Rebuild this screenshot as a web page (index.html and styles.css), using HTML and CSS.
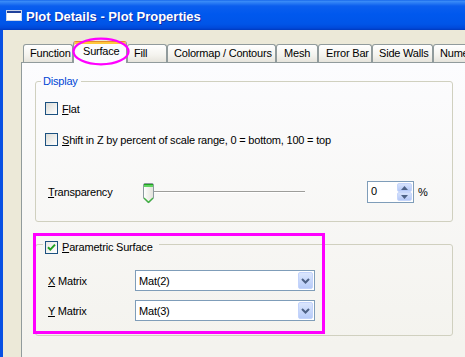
FILE: index.html
```html
<!DOCTYPE html>
<html lang="en">
<head>
    <meta charset="UTF-8">
    <meta name="viewport" content="width=device-width, initial-scale=1.0">
    <title>Plot Details - Plot Properties</title>
    <link rel="stylesheet" href="styles.css">
</head>
<body>
    <div class="window">
        <div class="titlebar">
            <svg class="app-icon" width="16" height="11" viewBox="0 0 16 11">
                <rect x="0.5" y="0.5" width="15" height="10" fill="#ffffff" stroke="#c9d4ea"/>
                <rect x="1" y="1" width="14" height="2" fill="#21439b"/>
            </svg>
            <span class="title">Plot Details - Plot Properties</span>
        </div>

        <div class="client">
            <div class="tabs">
                <div class="tab tab-function">Function</div>
                <div class="tab tab-surface active">Surface</div>
                <div class="tab tab-fill">Fill</div>
                <div class="tab tab-colormap">Colormap / Contours</div>
                <div class="tab tab-mesh">Mesh</div>
                <div class="tab tab-errorbar">Error Bar</div>
                <div class="tab tab-sidewalls">Side Walls</div>
                <div class="tab tab-numeric">Numeric</div>
                <!-- callout drawn around the selected tab -->
                <svg class="tab-marker" width="58" height="29" viewBox="0 0 58 29">
                    <ellipse cx="29" cy="14.5" rx="27.5" ry="12.8" fill="none" stroke="#ff00ff" stroke-width="2.3"/>
                </svg>
            </div>

            <div class="panel">
                <fieldset class="group group-display">
                    <legend>Display</legend>
                    <div class="check-row row-flat">
                        <span class="checkbox"></span>
                        <span><u>F</u>lat</span>
                    </div>
                    <div class="check-row row-shift">
                        <span class="checkbox"></span>
                        <span><u>S</u>hift in Z by percent of scale range, 0 = bottom, 100 = top</span>
                    </div>
                    <div class="field-row row-transparency">
                        <span class="field-label"><u>T</u>ransparency</span>
                        <div class="slider">
                            <svg class="slider-thumb" width="11" height="21" viewBox="0 0 11 21">
                                <defs>
                                    <linearGradient id="thumbFill" x1="0" y1="0" x2="1" y2="0">
                                        <stop offset="0" stop-color="#ffffff"/>
                                        <stop offset="1" stop-color="#e2e1da"/>
                                    </linearGradient>
                                </defs>
                                <path d="M0.5 2 Q0.5 0.5 2 0.5 H9 Q10.5 0.5 10.5 2 V15 L5.5 20 L0.5 15 Z" fill="url(#thumbFill)" stroke="#8c9a9f"/>
                                <rect x="1" y="1" width="9" height="1" fill="#21a121"/>
                                <rect x="1" y="2" width="9" height="2" fill="#5fd35f"/>
                                <path d="M1 15 L5.5 19.3 L10 15" fill="none" stroke="#3fb43f" stroke-width="1.2"/>
                            </svg>
                            <div class="slider-track"></div>
                        </div>
                        <div class="spin">
                            <span class="spin-value">0</span>
                            <div class="spin-buttons">
                                <span class="spin-btn">
                                    <svg width="7" height="4" viewBox="0 0 7 4"><path d="M0 4 L3.5 0 L7 4 Z" fill="#4d6185"/></svg>
                                </span>
                                <span class="spin-btn">
                                    <svg width="7" height="4" viewBox="0 0 7 4"><path d="M0 0 L3.5 4 L7 0 Z" fill="#4d6185"/></svg>
                                </span>
                            </div>
                        </div>
                        <span class="unit">%</span>
                    </div>
                </fieldset>

                <fieldset class="group group-param">
                    <legend>
                        <span class="checkbox checked">
                            <svg width="11" height="11" viewBox="0 0 11 11"><path d="M2 5.2 L4.3 7.6 L9 2.6" fill="none" stroke="#21a121" stroke-width="2"/></svg>
                        </span>
                        <span><u>P</u>arametric Surface</span>
                    </legend>
                    <div class="field-row row-xmatrix">
                        <span class="field-label"><u>X</u> Matrix</span>
                        <div class="combo">
                            <span class="combo-value">Mat(2)</span>
                            <span class="combo-btn">
                                <svg width="9" height="6" viewBox="0 0 9 6"><path d="M1 1 L4.5 4.5 L8 1" fill="none" stroke="#4d6185" stroke-width="2"/></svg>
                            </span>
                        </div>
                    </div>
                    <div class="field-row row-ymatrix">
                        <span class="field-label"><u>Y</u> Matrix</span>
                        <div class="combo">
                            <span class="combo-value">Mat(3)</span>
                            <span class="combo-btn">
                                <svg width="9" height="6" viewBox="0 0 9 6"><path d="M1 1 L4.5 4.5 L8 1" fill="none" stroke="#4d6185" stroke-width="2"/></svg>
                            </span>
                        </div>
                    </div>
                </fieldset>

                <!-- highlight frame over the parametric group -->
                <div class="highlight-box"></div>
            </div>
        </div>
    </div>
</body>
</html>
```

FILE: styles.css
```css
* {
    box-sizing: border-box;
}
html, body {
    margin: 0;
    padding: 0;
}
body {
    width: 465px;
    height: 357px;
    overflow: hidden;
    font-family: "Liberation Sans", Arial, sans-serif;
    font-size: 11px;
    letter-spacing: -0.2px;
    color: #000000;
    background-color: #ece9d8;
}
u {
    text-decoration-thickness: 1px;
    text-underline-offset: 1px;
}
.window {
    height: 357px;
    display: flex;
    flex-direction: column;
}

/* XP style caption */
.titlebar {
    height: 30px;
    flex: none;
    display: flex;
    align-items: flex-start;
    padding-left: 6px;
    background: linear-gradient(to bottom, #0a5ae6 0px, #3d8ef8 1px, #2a7cf4 3px, #0b5eee 6px, #0058ee 14px, #0055e8 24px, #0049da 28px, #0039be 30px);
}
.app-icon {
    margin-top: 10px;
    flex: none;
}
.title {
    margin-top: 9px;
    margin-left: 4px;
    color: #ffffff;
    font-weight: bold;
    font-size: 13px;
    letter-spacing: 0;
    text-shadow: 1px 1px 0 #0f2fa8;
}

.client {
    flex: 1;
    display: flex;
    flex-direction: column;
    border-left: 3px solid #0850e3;
    padding: 11px 0 0 18px;
}

/* tab strip */
.tabs {
    position: relative;
    height: 21px;
    flex: none;
    display: flex;
    align-items: flex-end;
    padding-left: 2px;
}
.tab {
    flex: none;
    height: 18px;
    border: 1px solid #919b9c;
    border-bottom: none;
    border-radius: 3px 3px 0 0;
    background: linear-gradient(to bottom, #ffffff, #f4f3ee 60%, #e6e4dc);
    padding-left: 6px;
    line-height: 17px;
    white-space: nowrap;
    overflow: hidden;
}
.tab.active {
    position: relative;
    z-index: 1;
    height: 22px;
    margin-bottom: -1px;
    border-top: 1px solid #e68b2c;
    box-shadow: inset 0 2px 0 #ffc83c;
    background: #fcfcfe;
    padding-left: 9px;
    line-height: 19px;
}
.tab-function { width: 50px; }
.tab-surface { width: 54px; }
.tab-fill { width: 40px; }
.tab-colormap { width: 109px; }
.tab-mesh { width: 42px; padding-left: 7px; }
.tab-errorbar { width: 54px; padding-left: 7px; }
.tab-sidewalls { width: 61px; }
.tab-numeric { width: 60px; }
.tab-marker {
    position: absolute;
    left: 51px;
    top: -4px;
    z-index: 2;
}

/* tab page */
.panel {
    flex: 1;
    position: relative;
    border: 1px solid #919b9c;
    border-right: none;
    border-bottom: none;
    background: linear-gradient(to bottom, #fcfcfe, #f4f3ee 280px);
    padding: 11px 0 0 13px;
}
.group {
    width: 418px;
    margin: 0;
    padding: 0;
    border: 1px solid #d0d0bf;
    border-radius: 3px;
    min-width: 0;
}
.group legend {
    line-height: 14px;
}
.group-display {
    padding-bottom: 18px;
}
.group-display legend {
    margin-left: 5px;
    padding: 0 3px 0 2px;
    color: #0046d5;
}
.group-param {
    margin-top: 13px;
    padding-bottom: 14px;
}
.group-param legend {
    display: flex;
    align-items: center;
    margin-left: 7px;
    padding: 5px 6px 0 2px;
}

.checkbox {
    flex: none;
    width: 13px;
    height: 13px;
    border: 1px solid #1c5180;
    background: linear-gradient(135deg, #dcdcd7, #ffffff);
    margin-right: 4px;
    display: flex;
    align-items: center;
    justify-content: center;
}
.checkbox.checked {
    background: linear-gradient(135deg, #e8e8e4, #ffffff);
}
.check-row {
    display: flex;
    align-items: center;
    height: 19px;
    padding-left: 9px;
}
.row-flat { margin-top: 11px; }
.row-shift { margin-top: 12px; }

.field-row {
    display: flex;
    align-items: center;
    padding-left: 12px;
}
.field-label {
    width: 87px;
    flex: none;
}
.row-transparency {
    margin-top: 32px;
    height: 22px;
}
.row-xmatrix {
    margin-top: 16px;
    height: 21px;
}
.row-ymatrix {
    margin-top: 9px;
    height: 21px;
}

/* trackbar */
.slider {
    width: 170px;
    height: 22px;
    flex: none;
    display: flex;
    align-items: flex-start;
    padding-left: 8px;
}
.slider-thumb {
    flex: none;
    margin-top: 2px;
}
.slider-track {
    flex: 1;
    height: 2px;
    margin-top: 10px;
    border-top: 1px solid #9d9d9a;
    border-bottom: 1px solid #ffffff;
}

/* spin box */
.spin {
    width: 47px;
    height: 22px;
    flex: none;
    margin-left: 62px;
    display: flex;
    border: 1px solid #7f9db9;
    background-color: #ffffff;
}
.spin-value {
    flex: 1;
    padding-left: 3px;
    line-height: 19px;
}
.spin-buttons {
    width: 16px;
    display: flex;
    flex-direction: column;
    padding: 1px 1px 1px 0;
}
.spin-btn {
    flex: 1;
    display: flex;
    align-items: center;
    justify-content: center;
    background: linear-gradient(to bottom, #d6e2fc, #b4c8f7);
    border: 1px solid #c6d6fb;
    border-radius: 2px;
}
.unit {
    margin-left: 4px;
}

/* combo box */
.combo {
    width: 180px;
    height: 21px;
    flex: none;
    display: flex;
    align-items: center;
    padding: 1px;
    border: 1px solid #7f9db9;
    background-color: #ffffff;
}
.combo-value {
    flex: 1;
    padding-left: 2px;
}
.combo-btn {
    width: 15px;
    height: 17px;
    display: flex;
    align-items: center;
    justify-content: center;
    background: linear-gradient(to bottom, #dbe6fd, #b7cbf8);
    border: 1px solid #c3d3fb;
    border-radius: 2px;
}

.highlight-box {
    position: absolute;
    left: 11px;
    top: 170px;
    width: 292px;
    height: 101px;
    border: 3px solid #ff00ff;
}
```
